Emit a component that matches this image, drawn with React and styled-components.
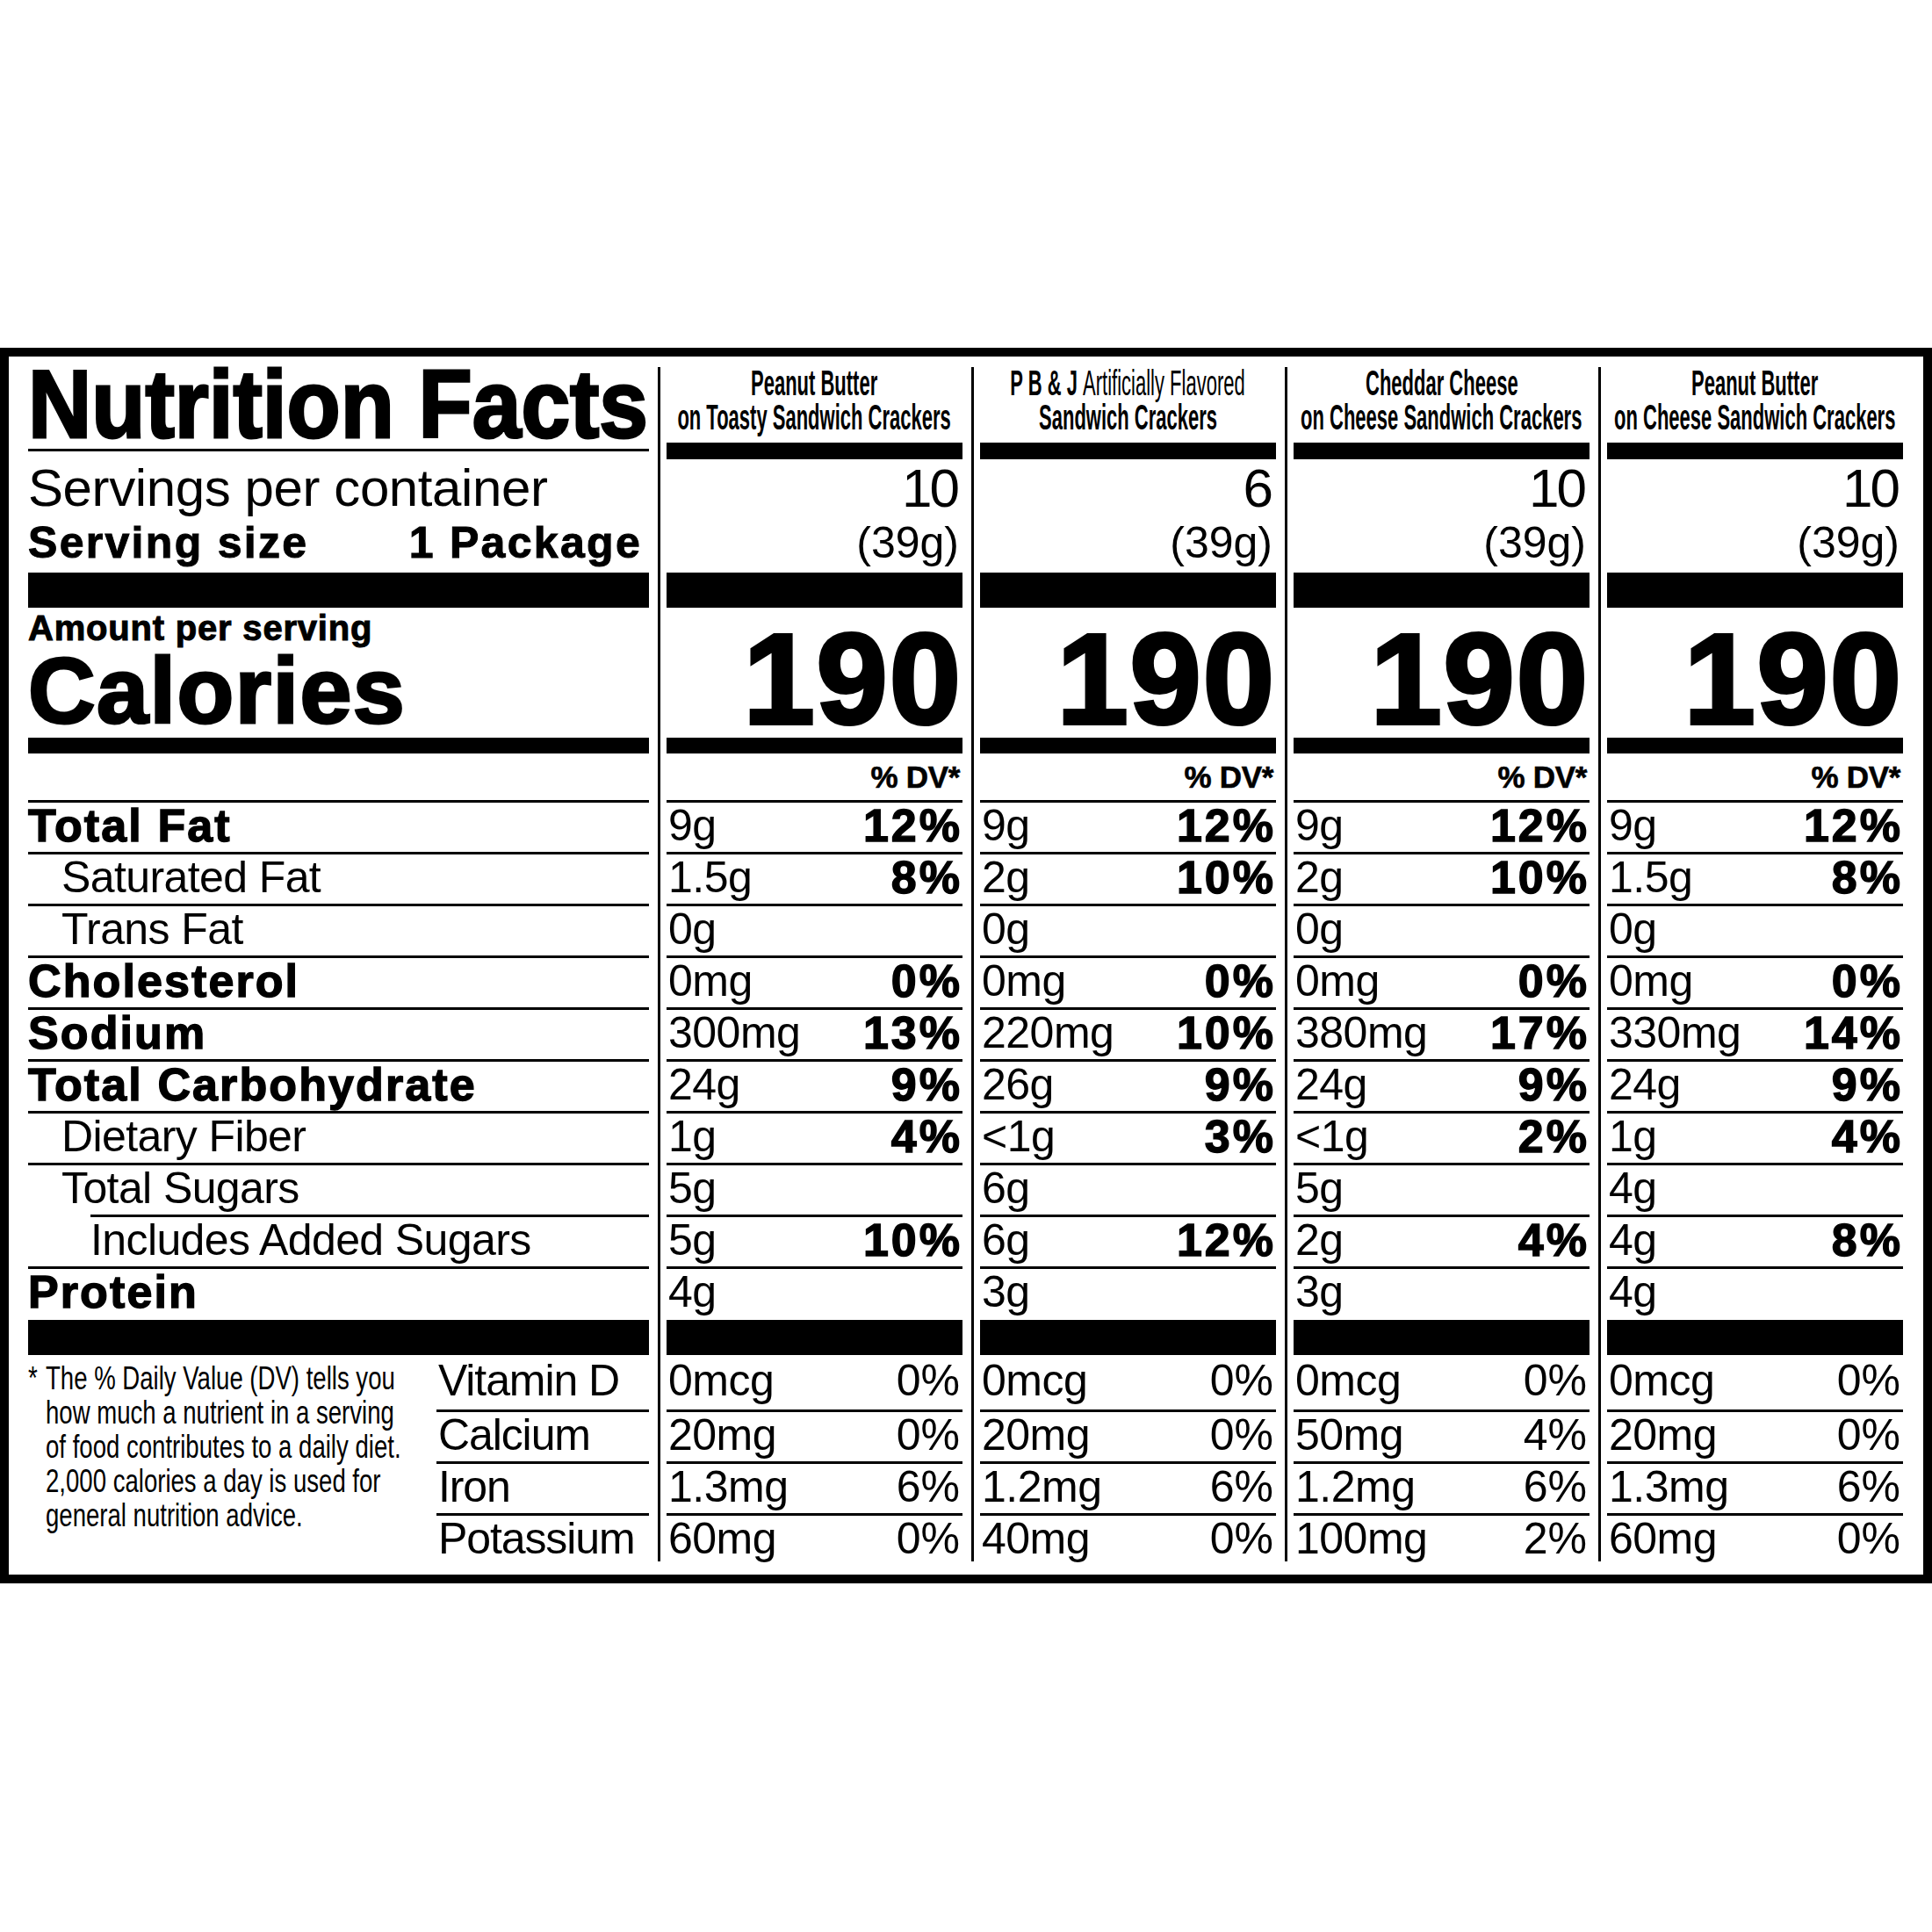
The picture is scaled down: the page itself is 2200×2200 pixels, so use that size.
import React from 'react';
import styled, { createGlobalStyle } from 'styled-components';

const Global = createGlobalStyle`
  html, body { margin: 0; padding: 0; background: #fff; }
  body { font-family: "Liberation Sans", Arial, Helvetica, sans-serif; color: #000; }
  #root { width: 2200px; }
`;

const Page = styled.div`
  box-sizing: border-box;
  width: 2200px;
  height: 2200px;
  padding-top: 396px;
  background: #fff;
`;

const Panel = styled.section`
  box-sizing: border-box;
  width: 2200px;
  border: 10px solid #000;
  padding: 12px 13px 15px 22px;
  display: flex;
  flex-direction: column;
`;

const Row = styled.div`
  display: grid;
  grid-template-columns: 717px repeat(4, 357px);
  height: ${(p) => p.$h}px;
`;

const LabelCell = styled.div`
  box-sizing: border-box;
  padding-right: 10px;
  min-width: 0;
`;

const ValueCell = styled.div`
  box-sizing: border-box;
  border-left: 3px solid #000;
  padding: 0 10px 0 7px;
  min-width: 0;
`;

const Bar = styled.div`
  height: 100%;
  background: #000;
`;

const ThinRule = styled.div`
  margin-top: ${(p) => p.$top}px;
  height: 3px;
  background: #000;
`;

const Title = styled.h1`
  margin: -1px 0 0;
  font-size: 109px;
  line-height: 86px;
  font-weight: 700;
  white-space: nowrap;
  -webkit-text-stroke: 3px #000;
  transform: scaleX(0.918);
  transform-origin: left center;
`;

const ProductName = styled.div`
  margin-top: -1px;
  display: flex;
  flex-direction: column;
  align-items: center;
  font-size: 40px;
  line-height: 39px;
  font-weight: 700;
`;

const Squeeze = styled.span`
  display: inline-block;
  flex-shrink: 0;
  white-space: nowrap;
  transform: scaleX(${(p) => p.$k});
  transform-origin: ${(p) => p.$origin || 'center'} center;
`;

const Light = styled.span`
  font-weight: 400;
`;

const ServingsText = styled.div`
  font-size: 60px;
  line-height: 66px;
  letter-spacing: -0.4px;
  white-space: nowrap;
`;

const ServingSize = styled.div`
  display: flex;
  justify-content: space-between;
  margin-top: 3px;
  padding-right: 8px;
  font-size: 50px;
  line-height: 52px;
  font-weight: 700;
  letter-spacing: 2.3px;
  white-space: nowrap;
  -webkit-text-stroke: 1px #000;
`;

const ServCount = styled.div`
  text-align: right;
  padding-right: 6px;
  font-size: 62px;
  line-height: 66px;
  letter-spacing: -3px;
`;

const ServWeight = styled.div`
  text-align: right;
  padding-right: 4px;
  margin-top: 3px;
  font-size: 50px;
  line-height: 52px;
`;

const AmountPer = styled.div`
  padding-top: 3px;
  font-size: 40px;
  line-height: 40px;
  font-weight: 700;
  letter-spacing: 0.8px;
  white-space: nowrap;
  -webkit-text-stroke: 1px #000;
`;

const CaloriesWord = styled.div`
  margin-top: 1px;
  font-size: 106px;
  line-height: 100px;
  font-weight: 700;
  letter-spacing: 1.5px;
  white-space: nowrap;
  -webkit-text-stroke: 3px #000;
`;

const CalValue = styled.div`
  padding-top: 9px;
  text-align: right;
  font-size: 146px;
  line-height: 146px;
  font-weight: 700;
  letter-spacing: 2px;
  white-space: nowrap;
  -webkit-text-stroke: 4px #000;
`;

const DvHead = styled.div`
  text-align: right;
  padding-right: 3px;
  font-size: 35px;
  line-height: 53px;
  font-weight: 700;
  letter-spacing: -0.3px;
  white-space: nowrap;
  -webkit-text-stroke: 0.6px #000;
`;

const Line = styled.div`
  box-sizing: border-box;
  height: 100%;
  margin-left: ${(p) => p.$inset || 0}px;
  border-top: 3px solid #000;
  display: flex;
  justify-content: space-between;
  align-items: flex-start;
  line-height: 52px;
  white-space: nowrap;
`;

const NutrientName = styled.span`
  padding-left: ${(p) => p.$pad || 0}px;
  font-size: ${(p) => (p.$bold ? 52 : 50)}px;
  font-weight: ${(p) => (p.$bold ? 700 : 400)};
  letter-spacing: ${(p) => (p.$bold ? '2.1px' : '-0.6px')};
  -webkit-text-stroke: ${(p) => (p.$bold ? '1.4px #000' : '0')};
`;

const Amount = styled.span`
  padding-left: 2px;
  font-size: 50px;
  letter-spacing: -0.5px;
`;

const Pct = styled.span`
  font-size: ${(p) => (p.$bold ? 52 : 50)}px;
  font-weight: ${(p) => (p.$bold ? 700 : 400)};
  letter-spacing: ${(p) => (p.$bold ? '3px' : '0')};
  padding-right: ${(p) => (p.$bold ? 0 : 3)}px;
  -webkit-text-stroke: ${(p) => (p.$bold ? '1.4px #000' : '0')};
`;

const BottomGrid = styled.div`
  display: grid;
  grid-template-columns: 465px 242px;
  height: 100%;
`;

const Footnote = styled.div`
  display: flex;
  padding-top: 7px;
  font-size: 37px;
  line-height: 39px;
  min-width: 0;
`;

const Star = styled.span`
  width: 20px;
  flex-shrink: 0;
  display: inline-block;
  transform: scaleX(0.75);
  transform-origin: left top;
`;

const FootLines = styled.div`
  white-space: nowrap;
  transform: scaleX(0.745);
  transform-origin: left top;
`;

const VitStack = styled.div`
  display: flex;
  flex-direction: column;
`;

const VitLine = styled.div`
  box-sizing: border-box;
  height: ${(p) => p.$h}px;
  border-top: ${(p) => (p.$first ? '0' : '3px solid #000')};
  padding-top: ${(p) => (p.$first ? 3 : 0)}px;
  display: flex;
  justify-content: space-between;
  line-height: 52px;
  white-space: nowrap;
`;

const VitName = styled.span`
  padding-left: 2px;
  font-size: 50px;
  letter-spacing: -1.1px;
`;

const products = [
  { l1: 'Peanut Butter', l2: 'on Toasty Sandwich Crackers', servings: '10' },
  { pbj: true, l2: 'Sandwich Crackers', servings: '6' },
  { l1: 'Cheddar Cheese', l2: 'on Cheese Sandwich Crackers', servings: '10' },
  { l1: 'Peanut Butter', l2: 'on Cheese Sandwich Crackers', servings: '10' },
];

const nutrients = [
  { name: 'Total Fat', bold: true, vals: [['9g', '12%'], ['9g', '12%'], ['9g', '12%'], ['9g', '12%']] },
  { name: 'Saturated Fat', pad: 38, vals: [['1.5g', '8%'], ['2g', '10%'], ['2g', '10%'], ['1.5g', '8%']] },
  { name: 'Trans Fat', pad: 38, vals: [['0g'], ['0g'], ['0g'], ['0g']] },
  { name: 'Cholesterol', bold: true, vals: [['0mg', '0%'], ['0mg', '0%'], ['0mg', '0%'], ['0mg', '0%']] },
  { name: 'Sodium', bold: true, vals: [['300mg', '13%'], ['220mg', '10%'], ['380mg', '17%'], ['330mg', '14%']] },
  { name: 'Total Carbohydrate', bold: true, vals: [['24g', '9%'], ['26g', '9%'], ['24g', '9%'], ['24g', '9%']] },
  { name: 'Dietary Fiber', pad: 38, vals: [['1g', '4%'], ['<1g', '3%'], ['<1g', '2%'], ['1g', '4%']] },
  { name: 'Total Sugars', pad: 38, vals: [['5g'], ['6g'], ['5g'], ['4g']] },
  { name: 'Includes Added Sugars', inset: 71, pad: 0, vals: [['5g', '10%'], ['6g', '12%'], ['2g', '4%'], ['4g', '8%']] },
  { name: 'Protein', bold: true, h: 61, vals: [['4g'], ['3g'], ['3g'], ['4g']] },
];

const vitamins = [
  { name: 'Vitamin D', h: 62, vals: [['0mcg', '0%'], ['0mcg', '0%'], ['0mcg', '0%'], ['0mcg', '0%']] },
  { name: 'Calcium', h: 59, vals: [['20mg', '0%'], ['20mg', '0%'], ['50mg', '4%'], ['20mg', '0%']] },
  { name: 'Iron', h: 59, vals: [['1.3mg', '6%'], ['1.2mg', '6%'], ['1.2mg', '6%'], ['1.3mg', '6%']] },
  { name: 'Potassium', h: 55, vals: [['60mg', '0%'], ['40mg', '0%'], ['100mg', '2%'], ['60mg', '0%']] },
];

const footLines = [
  'The % Daily Value (DV) tells you',
  'how much a nutrient in a serving',
  'of food contributes to a daily diet.',
  '2,000 calories a day is used for',
  'general nutrition advice.',
];

function BarRow({ h, labelRule }) {
  return (
    <Row $h={h}>
      <LabelCell>{labelRule ? <ThinRule $top={7} /> : <Bar />}</LabelCell>
      {products.map((_, i) => (
        <ValueCell key={i}>
          <Bar />
        </ValueCell>
      ))}
    </Row>
  );
}

export default function App() {
  return (
    <>
      <Global />
      <Page>
        <Panel>
          <Row $h={86}>
            <LabelCell>
              <Title>Nutrition Facts</Title>
            </LabelCell>
            {products.map((p, i) => (
              <ValueCell key={i}>
                <ProductName>
                  {p.pbj ? (
                    <Squeeze $k={0.55}>
                      P B &amp; J <Light>Artificially Flavored</Light>
                    </Squeeze>
                  ) : (
                    <Squeeze $k={0.55}>{p.l1}</Squeeze>
                  )}
                  <Squeeze $k={0.55}>{p.l2}</Squeeze>
                </ProductName>
              </ValueCell>
            ))}
          </Row>

          <BarRow h={19} labelRule />

          <Row $h={129}>
            <LabelCell>
              <ServingsText>Servings per container</ServingsText>
              <ServingSize>
                <span>Serving size</span>
                <span>1 Package</span>
              </ServingSize>
            </LabelCell>
            {products.map((p, i) => (
              <ValueCell key={i}>
                <ServCount>{p.servings}</ServCount>
                <ServWeight>(39g)</ServWeight>
              </ValueCell>
            ))}
          </Row>

          <BarRow h={40} />

          <Row $h={148}>
            <LabelCell>
              <AmountPer>Amount per serving</AmountPer>
              <CaloriesWord>Calories</CaloriesWord>
            </LabelCell>
            {products.map((_, i) => (
              <ValueCell key={i}>
                <CalValue>190</CalValue>
              </ValueCell>
            ))}
          </Row>

          <BarRow h={18} />

          <Row $h={53}>
            <LabelCell />
            {products.map((_, i) => (
              <ValueCell key={i}>
                <DvHead>% DV*</DvHead>
              </ValueCell>
            ))}
          </Row>

          {nutrients.map((n) => (
            <Row $h={n.h || 59} key={n.name}>
              <LabelCell>
                <Line $inset={n.inset}>
                  <NutrientName $bold={n.bold} $pad={n.pad}>
                    {n.name}
                  </NutrientName>
                </Line>
              </LabelCell>
              {n.vals.map((v, i) => (
                <ValueCell key={i}>
                  <Line>
                    <Amount>{v[0]}</Amount>
                    {v[1] && <Pct $bold>{v[1]}</Pct>}
                  </Line>
                </ValueCell>
              ))}
            </Row>
          ))}

          <BarRow h={40} />

          <Row $h={235}>
            <LabelCell>
              <BottomGrid>
                <Footnote>
                  <Star>*</Star>
                  <FootLines>
                    {footLines.map((l) => (
                      <div key={l}>{l}</div>
                    ))}
                  </FootLines>
                </Footnote>
                <VitStack>
                  {vitamins.map((v, k) => (
                    <VitLine key={v.name} $h={v.h} $first={k === 0}>
                      <VitName>{v.name}</VitName>
                    </VitLine>
                  ))}
                </VitStack>
              </BottomGrid>
            </LabelCell>
            {products.map((_, i) => (
              <ValueCell key={i}>
                <VitStack>
                  {vitamins.map((v, k) => (
                    <VitLine key={v.name} $h={v.h} $first={k === 0}>
                      <Amount>{v.vals[i][0]}</Amount>
                      <Pct>{v.vals[i][1]}</Pct>
                    </VitLine>
                  ))}
                </VitStack>
              </ValueCell>
            ))}
          </Row>
        </Panel>
      </Page>
    </>
  );
}
